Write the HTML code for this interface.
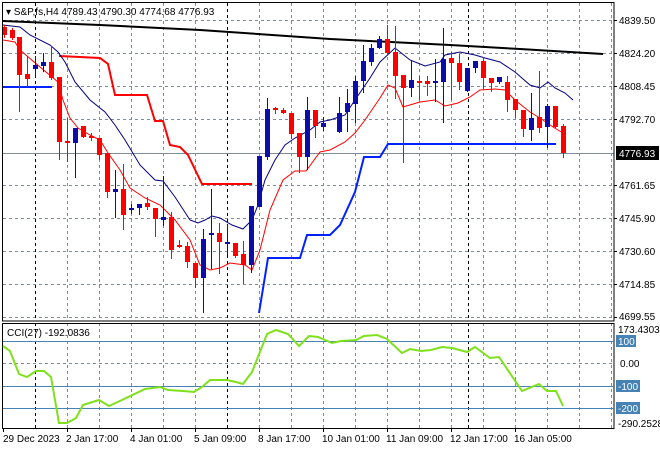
<!DOCTYPE html>
<html><head><meta charset="utf-8"><style>
html,body{margin:0;padding:0;background:#fff;}
svg{display:block;font-family:"Liberation Sans",sans-serif;font-size:10px;}
</style></head><body>
<svg width="660" height="450" viewBox="0 0 660 450" xmlns="http://www.w3.org/2000/svg">
<rect width="660" height="450" fill="#fff"/>
<g stroke="#7f8c99" stroke-width="1" stroke-dasharray="3,3" fill="none">
<path d="M3 20.5H614M3 53.5H614M3 86.5H614M3 119.5H614M3 185.5H614M3 218.5H614M3 251.5H614M3 284.5H614M3 317.5H614"/>
<path d="M67.5 3V321M99.5 3V321M131.5 3V321M163.5 3V321M195.5 3V321M259.5 3V321M291.5 3V321M323.5 3V321M355.5 3V321M387.5 3V321M419.5 3V321M451.5 3V321M483.5 3V321M515.5 3V321M547.5 3V321M579.5 3V321M611.5 3V321"/>
<path d="M67.5 323V428M99.5 323V428M131.5 323V428M163.5 323V428M195.5 323V428M259.5 323V428M291.5 323V428M323.5 323V428M355.5 323V428M387.5 323V428M419.5 323V428M451.5 323V428M483.5 323V428M515.5 323V428M547.5 323V428M579.5 323V428M611.5 323V428M3 363.5H614"/>
</g>
<g stroke="#000" stroke-width="1" stroke-dasharray="3,3" fill="none">
<path d="M35.5 3V321M227.5 3V321M468.5 3V321M35.5 323V428M227.5 323V428M468.5 323V428"/>
</g>
<path d="M3 153.5H614" stroke="#7f8c99" stroke-width="1"/>
<polyline points="3,21 100,25 200,30 330,39 450,45 520,49 603,54" fill="none" stroke="#000" stroke-width="2"/>
<path d="M3 87H52" stroke="#0022ff" stroke-width="2"/>
<polyline points="59,56 100,58 108,64 115,95 147,95 155,121 163,121 170,145 180,147 188,155 202,184 252,184" fill="none" stroke="#ff0000" stroke-width="2"/>
<polyline points="259,313 268,258 300,258 307,235 330,235 340,225 355,192 364,157 380,157 388,144 556,144" fill="none" stroke="#0022ff" stroke-width="2"/>
<polyline points="3,25 20,27 30,35 50,45 58,52 65,62 75,82 90,100 105,112 115,125 125,140 140,165 155,180 163,181 175,197 190,220 198,223 205,220 212,216 220,218 232,225 243,229 252,220 258,205 265,180 275,160 285,145 295,138 310,130 320,122 330,120 345,115 355,100 370,78 380,62 395,48 410,60 425,66 440,62 445,55 460,52 475,55 485,58 500,62 515,72 530,85 540,88 548,82 555,88 565,93 573,100" fill="none" stroke="#000080" stroke-width="1"/>
<polyline points="3,40 15,42 20,50 40,67 58,82 63,100 70,118 78,128 90,135 100,140 108,153 120,170 130,188 145,198 160,205 175,220 190,240 200,265 210,270 220,268 230,263 245,265 252,270 260,250 270,210 283,180 295,171 306,171 320,152 330,150 345,142 355,133 365,120 380,98 388,85 395,88 403,107 420,102 435,100 445,106 458,103 470,97 480,90 495,89 505,90 515,100 530,112 540,118 553,127 563,133" fill="none" stroke="#ff0000" stroke-width="1"/>
<g stroke="#ff0000" fill="#ff0000">
<path d="M4.5 25V38M12.5 28V40M19.5 37V112M27.5 56V87M51.5 46V80M59.5 77V160M67.5 118V162M83.5 126V138M91.5 133V141M99.5 138V160M107.5 153V198M123.5 164V230M147.5 197V210M155.5 208V237M171.5 212V259M179.5 240V248M187.5 242V268M195.5 263V288M219.5 223V274M235.5 243V258M243.5 241V284M275.5 107V114M283.5 108V114M291.5 113V139M299.5 133V173M315.5 110V138M387.5 25V55M395.5 26V99M403.5 75V163M419.5 76V100M427.5 76V96M451.5 52V100M459.5 54V90M483.5 57V89M491.5 78V92M507.5 76V112M515.5 99V118M523.5 110V137M539.5 71V133M555.5 106V128M563.5 124V158"/>
<g stroke="none">
<rect x="2" y="27" width="5" height="8"/><rect x="10" y="30" width="5" height="8"/><rect x="17" y="37" width="5" height="38"/><rect x="25" y="74" width="5" height="5"/><rect x="49" y="62" width="5" height="16"/><rect x="57" y="77" width="5" height="65"/><rect x="65" y="141" width="5" height="2"/><rect x="81" y="126" width="5" height="11"/><rect x="89" y="136" width="5" height="2"/><rect x="97" y="138" width="5" height="17"/><rect x="105" y="153" width="5" height="39"/><rect x="121" y="189" width="5" height="26"/><rect x="145" y="203" width="5" height="4"/><rect x="153" y="208" width="5" height="11"/><rect x="169" y="217" width="5" height="33"/><rect x="177" y="245" width="5" height="2"/><rect x="185" y="246" width="5" height="16"/><rect x="193" y="263" width="5" height="15"/><rect x="217" y="233" width="5" height="9"/><rect x="233" y="243" width="5" height="13"/><rect x="241" y="254" width="5" height="11"/><rect x="273" y="108" width="5" height="2"/><rect x="281" y="110" width="5" height="3"/><rect x="289" y="113" width="5" height="21"/><rect x="297" y="133" width="5" height="24"/><rect x="313" y="110" width="5" height="16"/><rect x="385" y="39" width="5" height="14"/><rect x="393" y="52" width="5" height="24"/><rect x="401" y="75" width="5" height="13"/><rect x="417" y="81" width="5" height="2"/><rect x="425" y="81" width="5" height="3"/><rect x="449" y="58" width="5" height="5"/><rect x="457" y="63" width="5" height="19"/><rect x="481" y="61" width="5" height="17"/><rect x="489" y="78" width="5" height="5"/><rect x="505" y="82" width="5" height="18"/><rect x="513" y="99" width="5" height="11"/><rect x="521" y="110" width="5" height="19"/><rect x="537" y="117" width="5" height="11"/><rect x="553" y="106" width="5" height="21"/><rect x="561" y="126" width="5" height="27"/>
</g></g>
<g stroke="#0000ff">
<path d="M35.5 56V77M43.5 53V72M75.5 128V178M115.5 170V218M131.5 204V214M139.5 204V215M163.5 176V226M203.5 229V313M211.5 189V269M227.5 224V255M251.5 206V273M259.5 156V207M267.5 98V160M307.5 97V170M323.5 117V131M339.5 97V133M347.5 89V132M355.5 76V123M363.5 45V93M371.5 44V66M379.5 36V49M411.5 61V97M435.5 59V102M443.5 28V123M467.5 68V92M475.5 61V73M499.5 77V84M531.5 93V141M547.5 104V148"/>
</g>
<g fill="#0c0ca8">
<rect x="33" y="65" width="5" height="4"/><rect x="41" y="62" width="5" height="4"/><rect x="73" y="128" width="5" height="15"/><rect x="113" y="189" width="5" height="3"/><rect x="129" y="208" width="5" height="2"/><rect x="137" y="204" width="5" height="4"/><rect x="161" y="217" width="5" height="3"/><rect x="201" y="239" width="5" height="39"/><rect x="209" y="233" width="5" height="2"/><rect x="225" y="242" width="5" height="2"/><rect x="249" y="206" width="5" height="59"/><rect x="257" y="156" width="5" height="51"/><rect x="265" y="109" width="5" height="48"/><rect x="305" y="110" width="5" height="47"/><rect x="321" y="123" width="5" height="4"/><rect x="337" y="113" width="5" height="19"/><rect x="345" y="103" width="5" height="9"/><rect x="353" y="81" width="5" height="23"/><rect x="361" y="61" width="5" height="20"/><rect x="369" y="48" width="5" height="14"/><rect x="377" y="39" width="5" height="9"/><rect x="409" y="80" width="5" height="8"/><rect x="433" y="81" width="5" height="2"/><rect x="441" y="59" width="5" height="23"/><rect x="465" y="68" width="5" height="23"/><rect x="473" y="61" width="5" height="7"/><rect x="497" y="77" width="5" height="5"/><rect x="529" y="118" width="5" height="12"/><rect x="545" y="106" width="5" height="21"/>
</g>
<rect x="2.5" y="2.5" width="611.5" height="318.5" fill="none" stroke="#000"/>
<rect x="2.5" y="323.5" width="611.5" height="105" fill="none" stroke="#000"/>
<g fill="#000">
<text x="619" y="24">4839.50</text><text x="619" y="57">4824.20</text><text x="619" y="90">4808.45</text><text x="619" y="123">4792.70</text><text x="619" y="189">4761.65</text><text x="619" y="222">4745.90</text><text x="619" y="255">4730.60</text><text x="619" y="288">4714.85</text><text x="619" y="320">4699.55</text>
</g>
<g stroke="#000"><path d="M614 20.5h3M614 53.5h3M614 86.5h3M614 119.5h3M614 185.5h3M614 218.5h3M614 251.5h3M614 284.5h3M614 317.5h3"/></g>
<rect x="616" y="146" width="43" height="14" fill="#000"/>
<text x="619" y="157" fill="#fff">4776.93</text>
<text x="6" y="15" fill="#000">▾ S&amp;P,fs,H4  4789.43 4790.30 4774.68 4776.93</text>
<g stroke="#4682b4" stroke-width="1"><path d="M3 341.5H614M3 386.5H614M3 408.5H614"/></g>
<polyline points="3,346 10,351 19,374 27,377 36,371 44,371 51,377 59,423 67,423 76,418 83,405 99,400 109,406 122,400 145,389 160,387 168,390 183,391 194,392 202,387 210,380 227,380 236,382 243,384 252,372 267,334 276,330 288,334 299,346 309,336 318,337 332,343 341,341 356,340 364,336 377,335 387,339 402,353 410,349 421,351 431,350 442,347 452,348 467,352 475,347 490,358 499,357 522,391 539,384 547,391 556,391 563,406" fill="none" stroke="#7fe01c" stroke-width="2"/>
<text x="7" y="336" fill="#000">CCI(27) -192.0836</text>
<text x="618" y="333" fill="#000">173.4303</text>
<rect x="616" y="335" width="20" height="12" fill="#4682b4"/><text x="618" y="345" fill="#fff">100</text>
<text x="620" y="367" fill="#000">0.00</text>
<rect x="616" y="380" width="24" height="12" fill="#4682b4"/><text x="618" y="390" fill="#fff">-100</text>
<rect x="616" y="402" width="24" height="12" fill="#4682b4"/><text x="618" y="412" fill="#fff">-200</text>
<text x="618" y="427" fill="#000">-290.2528</text>
<g stroke="#000"><path d="M3.5 428v4M67.5 428v4M131.5 428v4M195.5 428v4M259.5 428v4M323.5 428v4M387.5 428v4M451.5 428v4M515.5 428v4"/></g>
<g fill="#000">
<text x="3" y="442">29 Dec 2023</text><text x="66" y="442">2 Jan 17:00</text><text x="130" y="442">4 Jan 01:00</text><text x="194" y="442">5 Jan 09:00</text><text x="258" y="442">8 Jan 17:00</text><text x="322" y="442">10 Jan 01:00</text><text x="386" y="442">11 Jan 09:00</text><text x="450" y="442">12 Jan 17:00</text><text x="514" y="442">16 Jan 05:00</text>
</g>
</svg>
</body></html>
